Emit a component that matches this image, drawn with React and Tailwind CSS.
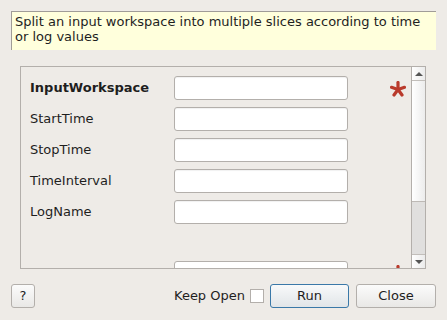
import React from 'react';

const fields = [
  { name: 'InputWorkspace', required: true },
  { name: 'StartTime' },
  { name: 'StopTime' },
  { name: 'TimeInterval' },
  { name: 'LogName' },
];

const Asterisk = () => (
  <svg width="16" height="16" viewBox="0 0 16 16">
    <g stroke="#b93a2c" strokeWidth="3.2" strokeLinecap="round">
      <line x1="8" y1="8.5" x2="8" y2="1.5" />
      <line x1="8" y1="8.5" x2="14.5" y2="6.3" />
      <line x1="8" y1="8.5" x2="1.5" y2="6.3" />
      <line x1="8" y1="8.5" x2="12" y2="14" />
      <line x1="8" y1="8.5" x2="4" y2="14" />
    </g>
  </svg>
);

const Field = ({ name, required }) => (
  <div className="flex items-center h-[24px]">
    <label className={`w-[144px] ${required ? 'font-bold' : ''}`}>{name}</label>
    <input className="w-[174px] h-[24px] bg-white border border-[#b3afab] rounded-[3px] outline-none shadow-[inset_0_1px_1px_rgba(0,0,0,0.06)]" />
    {required && (
      <div className="ml-[42px] mt-[1px]">
        <Asterisk />
      </div>
    )}
  </div>
);

const ScrollBar = () => (
  <div className="w-[14px] flex flex-col border-l border-[#b3afab] bg-[#efece8]">
    <div className="h-[14px] flex items-center justify-center border-b border-[#c2beba] bg-gradient-to-r from-white to-[#ebebeb]">
      <div className="w-0 h-0 border-l-[4px] border-r-[4px] border-b-[4px] border-l-transparent border-r-transparent border-b-[#555]" />
    </div>
    <div className="flex-1 bg-gradient-to-r from-white to-[#ececec]" />
    <div className="h-[53px] bg-[#e0dfde] border-t border-[#bdb9b5]" />
    <div className="h-[14px] flex items-center justify-center border-t border-[#c2beba] bg-gradient-to-r from-white to-[#ebebeb]">
      <div className="w-0 h-0 border-l-[4px] border-r-[4px] border-t-[4px] border-l-transparent border-r-transparent border-t-[#555]" />
    </div>
  </div>
);

export default function App() {
  return (
    <div
      className="w-[447px] h-[320px] bg-[#eeebe7] text-[#1e1e1e] text-[13px] flex flex-col overflow-hidden"
      style={{ fontFamily: '"DejaVu Sans", sans-serif' }}
    >
      <div className="mx-[11px] mt-[11px] h-[39px] bg-[#ffffdc] border-l border-t border-[#a09c98] pl-[3px] pt-[2px] leading-[15px]">
        Split an input workspace into multiple slices according to time or log values
      </div>

      <div className="mx-[20px] mt-[16px] mr-[21px] h-[203px] border border-[#b3afab] flex">
        <div className="flex-1 overflow-hidden pl-[9px] pt-[9px]">
          <div className="flex flex-col gap-[7px]">
            {fields.map((f) => (
              <Field key={f.name} {...f} />
            ))}
          </div>
          <div className="flex mt-[37px]">
            <div className="w-[144px]" />
            <input className="w-[174px] h-[24px] bg-white border border-[#b3afab] rounded-[3px]" />
            <div className="ml-[42px] mt-[4px]">
              <Asterisk />
            </div>
          </div>
        </div>
        <ScrollBar />
      </div>

      <div className="flex items-center mt-[15px] pl-[11px] pr-[11px]">
        <button className="w-[24px] h-[24px] border border-[#b3afab] rounded-[3px] bg-gradient-to-b from-[#fbfbfb] to-[#e9e8e6] text-[13px]">
          ?
        </button>
        <span className="ml-[139px]">Keep Open</span>
        <div className="ml-[5px] w-[14px] h-[14px] bg-white border border-[#b3afab]" />
        <button className="ml-[6px] w-[79px] h-[24px] border border-[#3a78a8] rounded-[3px] bg-gradient-to-b from-[#f8f9fa] to-[#e1e5e8]">
          Run
        </button>
        <button className="ml-[7px] w-[80px] h-[24px] border border-[#b3afab] rounded-[3px] bg-gradient-to-b from-[#fbfbfb] to-[#e9e8e6]">
          Close
        </button>
      </div>
    </div>
  );
}
